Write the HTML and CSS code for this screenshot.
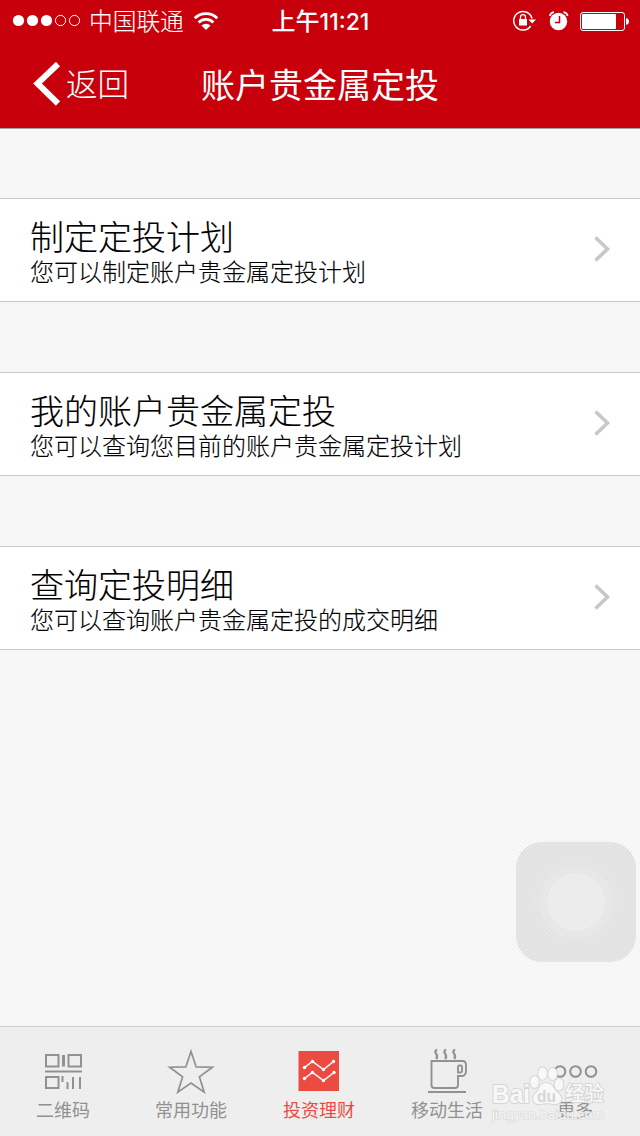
FILE: index.html
```
<!DOCTYPE html>
<html lang="zh-CN">
<head>
<meta charset="utf-8">
<title>账户贵金属定投</title>
<link rel="stylesheet" href="styles.css">
</head>
<body>
<div class="app">
  <header class="header">
    <div class="status">
      <div class="carrier">
        <svg width="70" height="14" viewBox="0 0 70 14"><g fill="#fff"><circle cx="6.500" cy="6.500" r="5.600"/><circle cx="20.500" cy="6.500" r="5.600"/><circle cx="34.500" cy="6.500" r="5.600"/></g><g fill="none" stroke="#fff"><circle cx="48.500" cy="6.500" r="5.100"/><circle cx="62.500" cy="6.500" r="5.100"/></g></svg>
        <span class="carrier-name">中国联通</span>
        <svg width="26" height="20" viewBox="0 0 26 20"><g fill="none" stroke="#fff" stroke-width="2.800"><path d="M1.700 7.200A16 16 0 0 1 24.300 7.200"/><path d="M5.600 11.400A10.500 10.500 0 0 1 20.400 11.400"/></g><path fill="#fff" d="M8.500 14.500A6.400 6.400 0 0 1 17.500 14.500L13 19z"/></svg>
      </div>
      <div class="time">上午<span class="digits">11:21</span></div>
      <div class="indicators">
        <svg width="26" height="22" viewBox="0 0 26 22"><path d="M18.700 16A9.300 9.300 0 1 1 20 8.500" fill="none" stroke="#fff" stroke-width="1.500"/><path d="M16.500 9.500h7.500l-3.800 4z" fill="#fff"/><path d="M7 9h8v6.500H7z" fill="#fff"/><path d="M8.500 9V7.200a2.500 2.500 0 0 1 5 0V9" fill="none" stroke="#fff" stroke-width="1.300"/></svg>
        <svg width="20" height="20" viewBox="0 0 20 20"><circle cx="9.500" cy="10.500" r="8.700" fill="#fff"/><path d="M.8 5Q1.400 1.600 5 1.100M18.700 5Q18.100 1.600 14.500 1.100" fill="none" stroke="#fff" stroke-width="1.600"/><path d="M10.500 5V11.500H6" fill="none" stroke="#c7000b" stroke-width="1.500"/></svg>
        <svg class="battery" width="50" height="20" viewBox="0 0 50 20"><rect x=".5" y=".5" width="44" height="18" rx="2.500" fill="none" stroke="#fff"/><rect x="2" y="2" width="34" height="15" rx="1" fill="#fff"/><path d="M46 6.200q3 .4 3 3.300t-3 3.300z" fill="#fff"/></svg>
      </div>
    </div>
    <div class="nav">
      <div class="back"><svg width="28" height="44" viewBox="0 0 28 44"><path d="M25 2L4.500 21.500l20.500 20" fill="none" stroke="#fff" stroke-width="6"/></svg><span>返回</span></div>
      <h1 class="title">账户贵金属定投</h1>
    </div>
  </header>
  <main class="list">
    <div class="row">
      <div class="text"><div class="name">制定定投计划</div><div class="desc">您可以制定账户贵金属定投计划</div></div>
      <svg class="chevron" width="18" height="28" viewBox="0 0 18 28"><path d="M1.500 1.500L13.500 13 1.500 24.500" fill="none" stroke="#c7c7cc" stroke-width="3.600"/></svg>
    </div>
    <div class="row">
      <div class="text"><div class="name">我的账户贵金属定投</div><div class="desc">您可以查询您目前的账户贵金属定投计划</div></div>
      <svg class="chevron" width="18" height="28" viewBox="0 0 18 28"><path d="M1.500 1.500L13.500 13 1.500 24.500" fill="none" stroke="#c7c7cc" stroke-width="3.600"/></svg>
    </div>
    <div class="row">
      <div class="text"><div class="name">查询定投明细</div><div class="desc">您可以查询账户贵金属定投的成交明细</div></div>
      <svg class="chevron" width="18" height="28" viewBox="0 0 18 28"><path d="M1.500 1.500L13.500 13 1.500 24.500" fill="none" stroke="#c7c7cc" stroke-width="3.600"/></svg>
    </div>
  </main>
  <nav class="tabs">
    <div class="tab">
      <svg width="48" height="48" viewBox="0 0 48 48"><g fill="none" stroke="#919191" stroke-width="2"><path d="M7 8h12.500v11.500H7zM29.500 8H42v11.500H29.500z"/><path d="M7 30h12.500v11H7z"/><path d="M24.500 8v11.500" stroke-width="3"/><path d="M6 24.500h37" stroke-width="2.200"/><path d="M23.500 29v6M28.500 35v7M34 30v12M41 30v12"/></g></svg>
      <span>二维码</span>
    </div>
    <div class="tab">
      <svg width="48" height="48" viewBox="0 0 48 48"><path d="M24 4.500l5.200 15.400 16.200.3-13 9.600 4.800 15.400L24 36 10.800 45.200l4.800-15.400-13-9.600 16.200-.3z" fill="none" stroke="#919191" stroke-width="1.700"/></svg>
      <span>常用功能</span>
    </div>
    <div class="tab active">
      <svg width="48" height="48" viewBox="0 0 48 48"><path fill="#ec4b42" d="M3.500 4h40.500v40H3.500z"/><g fill="none" stroke="#fff" stroke-width="1.500"><path d="M9.500 20.500l8-6 11 8 10-8M9.500 31.500l8-6 11 8 10.500-8"/></g><g fill="#fff"><circle cx="9.500" cy="20.500" r="1.700"/><circle cx="17.500" cy="14.500" r="1.700"/><circle cx="28.500" cy="22.500" r="1.700"/><circle cx="38.500" cy="14.500" r="1.700"/><circle cx="9.500" cy="31.500" r="1.700"/><circle cx="17.500" cy="25.500" r="1.700"/><circle cx="28.500" cy="33.500" r="1.700"/><circle cx="39" cy="25.500" r="1.700"/></g></svg>
      <span>投资理财</span>
    </div>
    <div class="tab">
      <svg width="48" height="48" viewBox="0 0 48 48"><g fill="none" stroke="#919191" stroke-width="1.900"><path d="M8.500 14h31q3.500 0 3.500 4v5.500q0 5.500-4 5.500h-4v9q0 3-3 3H11.500q-3 0-3-3z"/><path d="M36.500 18.500h1q1.500 0 1.500 1.500v4q0 1.500-1.500 1.500h-2.500V20q0-1.500 1.500-1.500z"/><path d="M5 45h38" stroke-width="2.200"/><path d="M14 2.500c-5 3 3 5-.8 9.500M23 2.500c-5 3 3 5-.8 9.500M32 2.500c-5 3 3 5-.8 9.500" stroke-width="2.200"/></g></svg>
      <span>移动生活</span>
    </div>
    <div class="tab">
      <svg width="48" height="48" viewBox="0 0 48 48"><g fill="none" stroke="#919191" stroke-width="2"><circle cx="9" cy="24.500" r="5.300"/><circle cx="24.500" cy="24.500" r="5.300"/><circle cx="40" cy="24.500" r="5.300"/></g></svg>
      <span>更多</span>
    </div>
  </nav>
  <div class="assistive"><svg width="120" height="120" viewBox="0 0 120 120"><g fill="#fff"><circle cx="60" cy="60" r="44" opacity=".06"/><circle cx="60" cy="60" r="36.500" opacity=".12"/><circle cx="60" cy="60" r="29" opacity=".22"/></g></svg></div>
  <svg class="watermark" width="120" height="62" viewBox="0 0 120 62">
    <g class="halo">
      <text x="1" y="41" font-size="25" font-weight="700" textLength="38" lengthAdjust="spacingAndGlyphs">Bai</text>
      <ellipse cx="43.500" cy="20" rx="4.300" ry="6"/><ellipse cx="51.500" cy="11.500" rx="4.300" ry="6.300"/><ellipse cx="61.500" cy="12" rx="4.300" ry="6"/><ellipse cx="68" cy="22.500" rx="4.300" ry="6"/>
      <path d="M55 21c-6 0-7 7-10 10-6 5-2 12 4 11q7-1.500 14 0c7 1 10-6 4-11-4-3-5-10-12-10z"/>
      <text x="74" y="39" font-size="20" font-weight="500" textLength="39" lengthAdjust="spacingAndGlyphs">经验</text>
      <text class="site" x="1" y="57" font-size="13" textLength="112" lengthAdjust="spacingAndGlyphs">jingyan.baidu.com</text>
    </g>
    <text x="46" y="40" font-size="17" font-weight="700" fill="#d6d6d6" textLength="19" lengthAdjust="spacingAndGlyphs">du</text>
  </svg>
</div>
</body>
</html>
```
FILE: styles.css
```
* { box-sizing: border-box; }
body {
  margin: 0;
  font-family: "Liberation Sans", "Noto Sans CJK SC", sans-serif;
  color: #000;
}
svg { display: block; flex: none; }
.app {
  position: relative;
  width: 640px;
  height: 1136px;
  display: flex;
  flex-direction: column;
  overflow: hidden;
  background: repeating-linear-gradient(135deg, #fafafa 0 1.414px, #f3f3f3 1.414px 2.828px);
}
.header {
  height: 129px;
  background: #c7000b;
  border-bottom: 1px solid #a59f9f;
  color: #fff;
}
.status {
  height: 40px;
  display: grid;
  grid-template-columns: 240px 160px 240px;
  align-items: center;
  font-size: 24px;
  line-height: 40px;
}
.carrier { display: flex; align-items: center; padding-left: 12px; }
.carrier-name {
  margin: 2px 9px 0 7px;
  font-weight: 300;
  font-size: 23.7px;
  white-space: nowrap;
  -webkit-text-stroke: .1px #fff;
}
.time {
  padding-top: 1px;
  padding-left: 1px;
  text-align: center;
  font-weight: 500;
  white-space: nowrap;
}
.digits { font-family: Inter, sans-serif; font-size: 23px; }
.indicators { display: flex; align-items: center; justify-content: flex-end; padding-right: 10px; gap: 11px; }
.battery { margin-top: 2px; }
.nav {
  height: 88px;
  display: grid;
  grid-template-columns: 160px 320px 160px;
  align-items: center;
}
.back { display: flex; align-items: center; padding-left: 33px; gap: 5px; font-size: 31.5px; font-weight: 300; line-height: 44px; white-space: nowrap; }
.back span { padding-top: 2px; -webkit-text-stroke: .1px #fff; }
.title { margin: 0; padding-top: 3px; font-size: 34px; line-height: 44px; font-weight: 400; text-align: center; white-space: nowrap; }
.list {
  flex: 1;
  padding-top: 69px;
  display: flex;
  flex-direction: column;
  gap: 70px;
}
.row {
  height: 104px;
  display: flex;
  align-items: center;
  justify-content: space-between;
  padding: 0 28px 0 30px;
  background: #fff;
  border: solid #c8c8c8;
  border-width: 1px 0;
}
.text { padding-top: 7px; font-weight: 300; -webkit-text-stroke: .12px #000; }
.name { font-size: 34px; line-height: 38px; }
.desc { font-size: 24px; line-height: 32px; }
.tabs {
  height: 110px;
  display: grid;
  grid-template-columns: repeat(5, 128px);
  margin-left: -1px;
  padding-top: 20px;
  background: #eee;
  border-top: 1px solid #cbcfcb;
  width: 641px;
}
.tab {
  display: flex;
  flex-direction: column;
  align-items: center;
  font-size: 18px;
  line-height: 26px;
  color: #919191;
  gap: 3px;
}
.active { color: #ec4b42; }
.assistive {
  position: absolute;
  left: 516px;
  top: 842px;
  width: 120px;
  height: 120px;
  border-radius: 26px;
  background: rgba(0, 0, 0, .075);
}
.watermark { position: absolute; left: 491px; top: 1062px; }
.halo { fill: #f8f8f8; stroke: #d6d6d6; stroke-width: 2px; paint-order: stroke; stroke-linejoin: round; }
.site { stroke-width: 1.2px; opacity: .85; }
```
